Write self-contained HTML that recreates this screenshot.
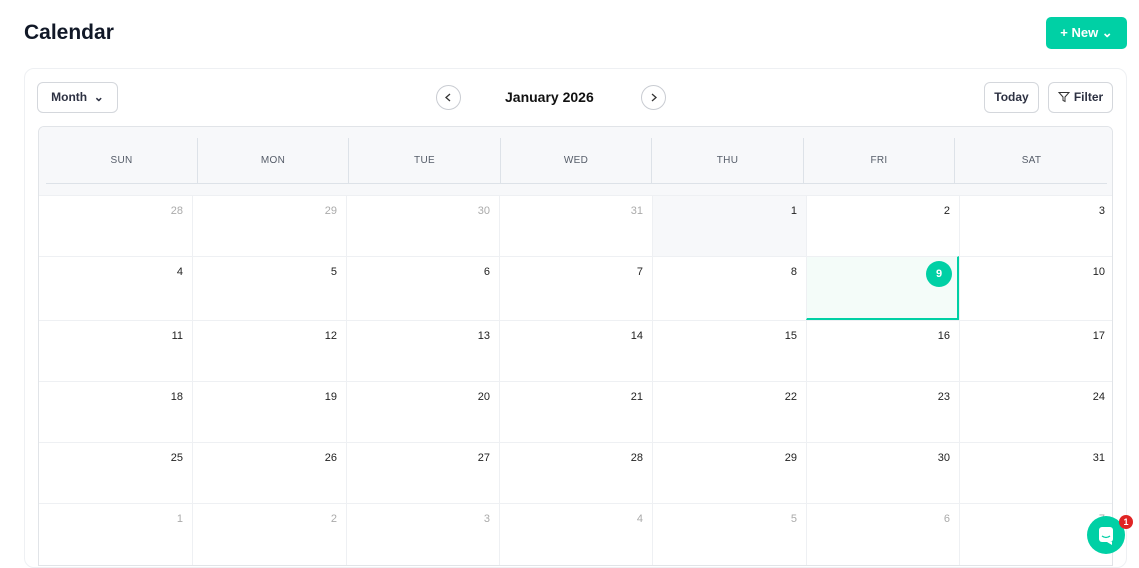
<!DOCTYPE html><html><head><style>
*{box-sizing:border-box;margin:0;padding:0}
body{width:1139px;height:554px;overflow:hidden;background:#fff;font-family:"Liberation Sans",sans-serif;color:#1a1d29;position:relative}
h1{position:absolute;left:24px;top:21px;font-size:21px;font-weight:700;color:#111827}
.new{position:absolute;left:1046px;top:17px;width:81px;height:32px;background:#00d0a5;border-radius:5px;color:#fff;font-weight:700;font-size:13px;line-height:32px;text-align:center}
.card{position:absolute;left:24px;top:68px;width:1103px;height:500px;border:1px solid #eef0f3;border-radius:10px}
.btn{position:absolute;top:82px;height:31px;border:1px solid #d4d7dc;border-radius:6px;font-size:12px;font-weight:700;line-height:29px;text-align:center;color:#2d3142;background:#fff}
.circ{position:absolute;top:85px;width:25px;height:25px;border:1px solid #c9ccd2;border-radius:50%;}
.title{position:absolute;left:505px;top:89px;font-size:14px;font-weight:700;color:#111}
.grid{position:absolute;left:38px;top:126px;width:1075px;height:440px;border:1px solid #e1e4e8;border-radius:6px 6px 0 0;overflow:hidden}
.hd{position:absolute;left:0;top:0;width:100%;height:68px;background:#f7f8fa}
.hc{position:absolute;top:11px;height:46px;border-left:1px solid #dde2e8;font-size:10px;font-weight:400;color:#555c68;text-align:center;line-height:46px;letter-spacing:.3px}
.hline{position:absolute;left:7px;right:5px;top:56px;border-top:1px solid #dde2e8}
.c{position:absolute;border-left:1px solid #eef0f3;border-top:1px solid #eef0f3;font-size:11px;text-align:right;padding:9px 9px 0 0;color:#222}
.o{color:#aaa}
</style></head><body>
<h1>Calendar</h1>
<div class="new">+ New ⌄</div>
<div class="card"></div>
<div class="btn" style="left:37px;width:81px">Month &nbsp;⌄</div>
<div class="circ" style="left:436px"><svg width="23" height="23"><path d="M13 8l-4 3.5 4 3.5" stroke="#333" fill="none" stroke-width="1.3"/></svg></div>
<div class="title">January 2026</div>
<div class="circ" style="left:641px"><svg width="23" height="23"><path d="M10 8l4 3.5-4 3.5" stroke="#333" fill="none" stroke-width="1.3"/></svg></div>
<div class="btn" style="left:984px;width:55px">Today</div>
<div class="btn" style="left:1048px;width:65px"><svg width="12" height="12" style="vertical-align:-2px;margin-right:4px"><path d="M1 1.5h10L7 6v4.5L5 9.5V6z" stroke="#333" fill="none" stroke-width="1"/></svg>Filter</div>
<div class="grid">
<div class="hd">
<div class="hc" style="left:7px;width:151px;border-left:none">SUN</div>
<div class="hc" style="left:158px;width:151px">MON</div>
<div class="hc" style="left:309px;width:152px">TUE</div>
<div class="hc" style="left:461px;width:151px">WED</div>
<div class="hc" style="left:612px;width:152px">THU</div>
<div class="hc" style="left:764px;width:151px">FRI</div>
<div class="hc" style="left:915px;width:154px">SAT</div>
<div class="hline"></div>
</div>
<div id="b"></div>
</div>
<div style="position:absolute;left:1087px;top:516px;width:38px;height:38px;border-radius:50%;background:#00d0a5"><svg width="38" height="38"><rect x="12" y="11" width="14" height="15" rx="3" fill="#fff"/><path d="M20 26l5 3v-3z" fill="#fff"/><path d="M15 20q4 3 8 0" stroke="#00d0a5" fill="none" stroke-width="1.3"/></svg></div>
<div style="position:absolute;left:1119px;top:515px;width:14px;height:14px;border-radius:50%;background:#e02424;color:#fff;font-size:9px;font-weight:700;text-align:center;line-height:14px">1</div>
<script>
var xs=[0,153,307,460,613,767,920,1075],ys=[68,129,193,254,315,376,439];
var d=[[28,29,30,31,1,2,3],[4,5,6,7,8,9,10],[11,12,13,14,15,16,17],[18,19,20,21,22,23,24],[25,26,27,28,29,30,31],[1,2,3,4,5,6,7]];
var h='';
for(var r=0;r<6;r++)for(var c=0;c<7;c++){
var o=(r==0&&c<4)||r==5;var st='left:'+xs[c]+'px;top:'+ys[r]+'px;width:'+(xs[c+1]-xs[c])+'px;height:'+(ys[r+1]-ys[r])+'px;';
if(c==0)st+='border-left:none;';
if(r==0&&c==4)st+='background:#f7f8fa;';
var t=d[r][c];
if(r==1&&c==5){st+='background:#f4fcf9;border-right:2px solid #00d0a5;border-bottom:2px solid #00d0a5;padding:4px 5px 0 0;';t='<span style="display:inline-block;width:26px;height:26px;border-radius:50%;background:#00d0a5;color:#fff;font-weight:700;text-align:center;line-height:26px">9</span>';}
h+='<div class="c'+(o?' o':'')+'" style="'+st+'">'+t+'</div>';}
document.getElementById('b').innerHTML=h;
</script>
</body></html>
